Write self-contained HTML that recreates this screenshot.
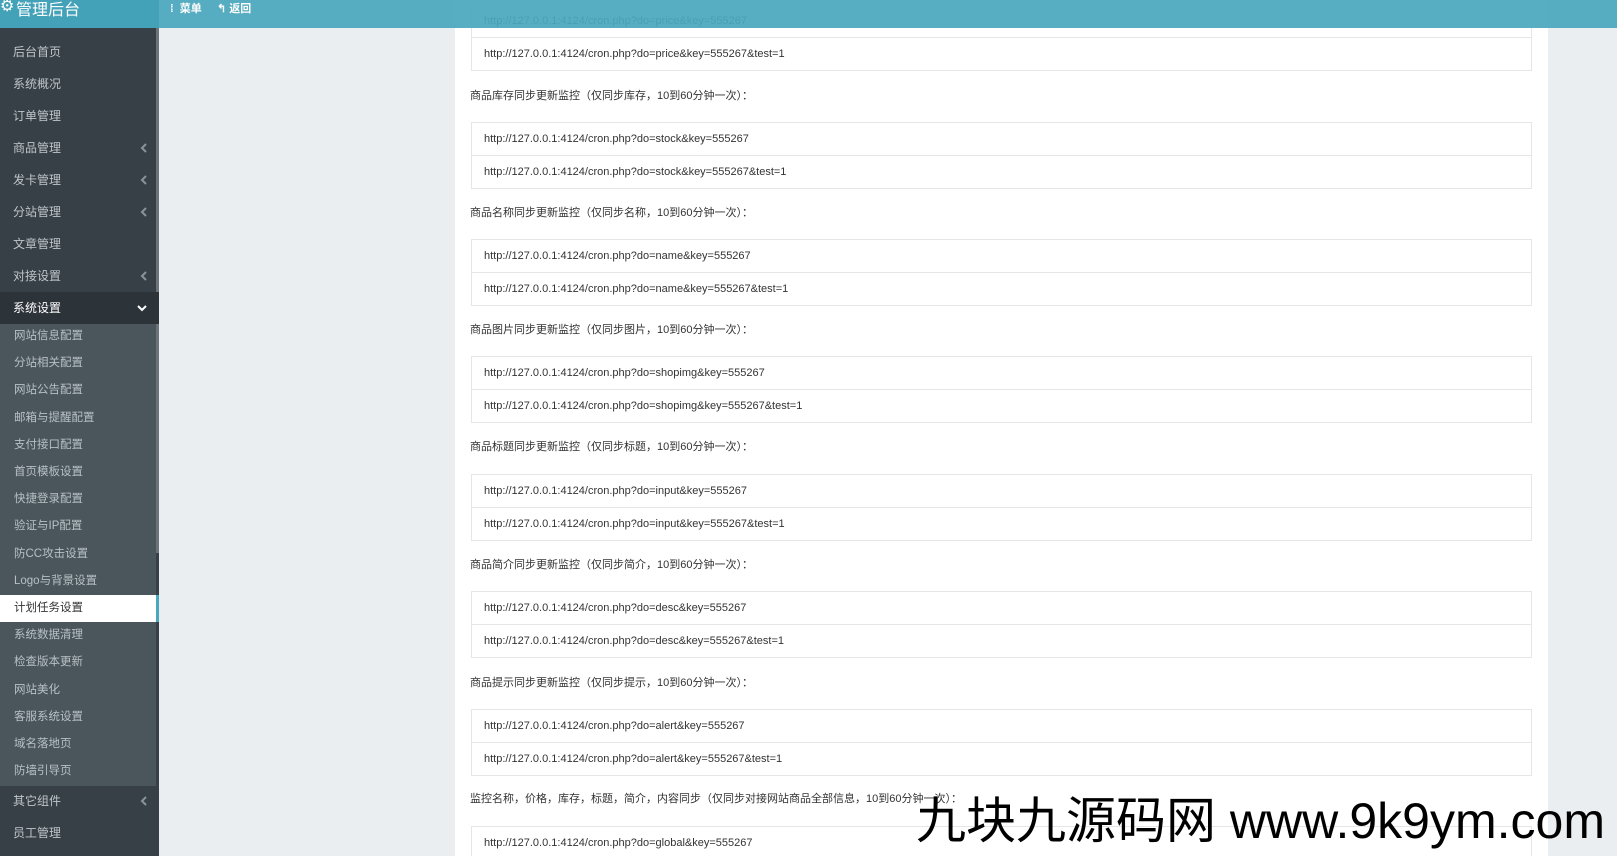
<!DOCTYPE html>
<html><head><meta charset="utf-8"><style>
*{margin:0;padding:0;box-sizing:border-box}
html{overflow:hidden;width:1617px;height:856px}
body{width:1617px;height:856px;overflow:hidden;background:#eaeef1;font-family:"Liberation Sans","Noto Sans CJK SC",sans-serif;position:relative}
#hd{position:absolute;left:0;top:0;width:1617px;height:28px;background:rgba(74,167,188,0.93);z-index:10;color:#fff}
#hd .brand{position:absolute;left:0;top:0;width:159px;height:28px;background:rgba(66,160,183,0.95)}
#sb{position:absolute;left:0;top:28px;width:159px;height:828px;background:#374047}
.it{position:absolute;left:0;width:159px;height:32px;line-height:32px;color:#bfc5c9;font-size:12px;padding-left:13px}
.it svg{position:absolute;right:12px;top:11px}
.sub{position:absolute;left:0;width:159px;height:27px;line-height:27px;color:#b8c0c5;font-size:11.5px;padding-left:14px}
#panel{position:absolute;left:455px;top:0;width:1093px;height:856px;background:#fff}
.lb{position:absolute;left:470px;font-size:11px;color:#333;height:16px;line-height:16px}
.bx{position:absolute;left:471px;width:1061px;border:1px solid #e6e6e6;background:#fff}
.bx div{height:33px;line-height:32px;padding-left:12px;font-size:11px;color:#333;border-top:1px solid #e6e6e6}
.bx div:first-child{border-top:none;height:32px}
#wm{position:absolute;left:916px;top:791px;font-size:50px;color:#000;z-index:5;white-space:nowrap;line-height:60px}
</style></head><body>
<div id="panel"></div>
<div id="hd"><div class="brand"></div>
<span style="position:absolute;left:0;top:-4px;font-size:16px">⚙</span>
<span style="position:absolute;left:16px;top:-4px;font-size:16px">管理后台</span>
<span style="position:absolute;left:170px;top:0;font-size:11px;font-weight:bold">⁞&nbsp; 菜单</span>
<span style="position:absolute;left:217px;top:0;font-size:11px;font-weight:bold">↰ 返回</span>
</div>
<div id="sb">
<div style="position:absolute;left:156px;top:0;width:3px;height:525px;background:#6c7379"></div>
<div class="it" style="top:8px">后台首页</div>
<div class="it" style="top:40px">系统概况</div>
<div class="it" style="top:72px">订单管理</div>
<div class="it" style="top:104px">商品管理<svg width="7" height="10"><path d="M6 1L2 5l4 4" stroke="#8a9399" stroke-width="2" fill="none"/></svg></div>
<div class="it" style="top:136px">发卡管理<svg width="7" height="10"><path d="M6 1L2 5l4 4" stroke="#8a9399" stroke-width="2" fill="none"/></svg></div>
<div class="it" style="top:168px">分站管理<svg width="7" height="10"><path d="M6 1L2 5l4 4" stroke="#8a9399" stroke-width="2" fill="none"/></svg></div>
<div class="it" style="top:200px">文章管理</div>
<div class="it" style="top:232px">对接设置<svg width="7" height="10"><path d="M6 1L2 5l4 4" stroke="#8a9399" stroke-width="2" fill="none"/></svg></div>
<div class="it" style="top:264px;background:#2c343a;color:#fff">系统设置<svg width="10" height="8" style="top:12px"><path d="M1 2l4 4 4-4" stroke="#fff" stroke-width="2" fill="none"/></svg></div>
<div style="position:absolute;left:0;top:296px;width:156px;height:462px;background:#4a555c"></div>
<div class="sub" style="top:295px">网站信息配置</div>
<div class="sub" style="top:322px">分站相关配置</div>
<div class="sub" style="top:349px">网站公告配置</div>
<div class="sub" style="top:377px">邮箱与提醒配置</div>
<div class="sub" style="top:404px">支付接口配置</div>
<div class="sub" style="top:431px">首页模板设置</div>
<div class="sub" style="top:458px">快捷登录配置</div>
<div class="sub" style="top:485px">验证与IP配置</div>
<div class="sub" style="top:513px">防CC攻击设置</div>
<div class="sub" style="top:540px">Logo与背景设置</div>
<div class="sub" style="top:567px;background:#fff;color:#333;border-right:3px solid #4aa7bc">计划任务设置</div>
<div class="sub" style="top:594px">系统数据清理</div>
<div class="sub" style="top:621px">检查版本更新</div>
<div class="sub" style="top:649px">网站美化</div>
<div class="sub" style="top:676px">客服系统设置</div>
<div class="sub" style="top:703px">域名落地页</div>
<div class="sub" style="top:730px">防墙引导页</div>
<div class="it" style="top:757px">其它组件<svg width="7" height="10"><path d="M6 1L2 5l4 4" stroke="#8a9399" stroke-width="2" fill="none"/></svg></div>
<div class="it" style="top:789px">员工管理</div>
</div>

<div class="bx" style="top:4px"><div>http://127.0.0.1:4124/cron.php?do=price&amp;key=555267</div><div>http://127.0.0.1:4124/cron.php?do=price&amp;key=555267&amp;test=1</div></div>
<div class="lb" style="top:88px">商品库存同步更新监控（仅同步库存，10到60分钟一次）：</div>
<div class="bx" style="top:122px"><div>http://127.0.0.1:4124/cron.php?do=stock&amp;key=555267</div><div>http://127.0.0.1:4124/cron.php?do=stock&amp;key=555267&amp;test=1</div></div>
<div class="lb" style="top:205px">商品名称同步更新监控（仅同步名称，10到60分钟一次）：</div>
<div class="bx" style="top:239px"><div>http://127.0.0.1:4124/cron.php?do=name&amp;key=555267</div><div>http://127.0.0.1:4124/cron.php?do=name&amp;key=555267&amp;test=1</div></div>
<div class="lb" style="top:322px">商品图片同步更新监控（仅同步图片，10到60分钟一次）：</div>
<div class="bx" style="top:356px"><div>http://127.0.0.1:4124/cron.php?do=shopimg&amp;key=555267</div><div>http://127.0.0.1:4124/cron.php?do=shopimg&amp;key=555267&amp;test=1</div></div>
<div class="lb" style="top:439px">商品标题同步更新监控（仅同步标题，10到60分钟一次）：</div>
<div class="bx" style="top:474px"><div>http://127.0.0.1:4124/cron.php?do=input&amp;key=555267</div><div>http://127.0.0.1:4124/cron.php?do=input&amp;key=555267&amp;test=1</div></div>
<div class="lb" style="top:557px">商品简介同步更新监控（仅同步简介，10到60分钟一次）：</div>
<div class="bx" style="top:591px"><div>http://127.0.0.1:4124/cron.php?do=desc&amp;key=555267</div><div>http://127.0.0.1:4124/cron.php?do=desc&amp;key=555267&amp;test=1</div></div>
<div class="lb" style="top:675px">商品提示同步更新监控（仅同步提示，10到60分钟一次）：</div>
<div class="bx" style="top:709px"><div>http://127.0.0.1:4124/cron.php?do=alert&amp;key=555267</div><div>http://127.0.0.1:4124/cron.php?do=alert&amp;key=555267&amp;test=1</div></div>
<div class="lb" style="top:791px">监控名称，价格，库存，标题，简介，内容同步（仅同步对接网站商品全部信息，10到60分钟一次）：</div>
<div class="bx" style="top:826px;height:40px"><div>http://127.0.0.1:4124/cron.php?do=global&amp;key=555267</div></div>
<div id="wm">九块九源码网 www.9k9ym.com</div>
</body></html>
